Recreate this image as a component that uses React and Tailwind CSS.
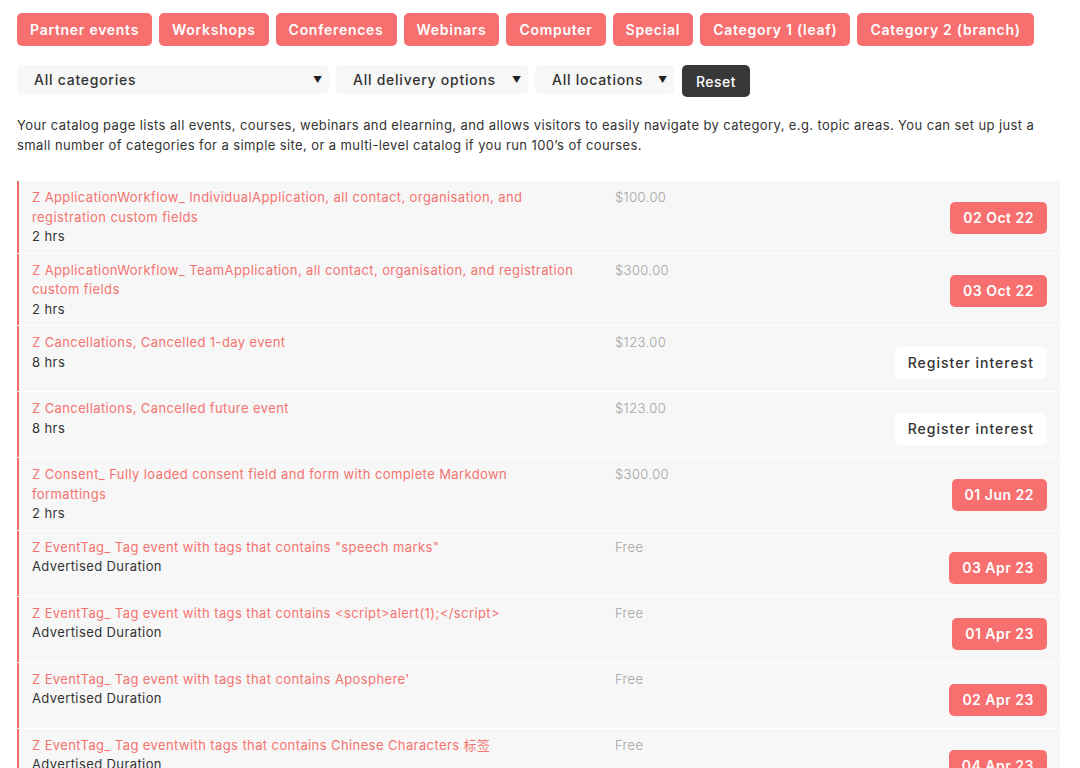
import React from "react";

const TAGS = [
  "Partner events", "Workshops", "Conferences", "Webinars", "Computer",
  "Special", "Category 1 (leaf)", "Category 2 (branch)",
];

const EVENTS = [
  { title: "Z ApplicationWorkflow_ IndividualApplication, all contact, organisation, and registration custom fields", dur: "2 hrs", price: "$100.00", date: "02 Oct 22" },
  { title: "Z ApplicationWorkflow_ TeamApplication, all contact, organisation, and registration custom fields", dur: "2 hrs", price: "$300.00", date: "03 Oct 22" },
  { title: "Z Cancellations, Cancelled 1-day event", dur: "8 hrs", price: "$123.00", interest: true },
  { title: "Z Cancellations, Cancelled future event", dur: "8 hrs", price: "$123.00", interest: true },
  { title: "Z Consent_ Fully loaded consent field and form with complete Markdown", rest: "formattings", dur: "2 hrs", price: "$300.00", date: "01 Jun 22" },
  { title: "Z EventTag_ Tag event with tags that contains \"speech marks\"", dur: "Advertised Duration", price: "Free", date: "03 Apr 23" },
  { title: "Z EventTag_ Tag event with tags that contains <script>alert(1);</script>", dur: "Advertised Duration", price: "Free", date: "01 Apr 23" },
  { title: "Z EventTag_ Tag event with tags that contains Aposphere'", dur: "Advertised Duration", price: "Free", date: "02 Apr 23" },
  { title: "Z EventTag_ Tag eventwith tags that contains Chinese Characters 标签", dur: "Advertised Duration", price: "Free", date: "04 Apr 23" },
];

const Select = ({ label, w }) => (
  <div className={`${w} h-[29px] bg-[#f7f7f7] rounded-[5px] flex items-center justify-between pl-[17px] pr-[6px] text-[14px] font-medium text-[#333] tracking-[0.75px]`}>
    <span>{label}</span>
    <span className="text-[9px] text-[#222]">▼</span>
  </div>
);

const EventRow = ({ e }) => (
  <div className="flex bg-[#f7f7f7] border-l-2 border-[#f26a6a] pt-[7px] pb-[6px] pl-[13px] pr-[13px] text-[13px] leading-[19.5px] tracking-[0.4px]">
    <div className="w-[562px] mr-[21px]">
      <p className="text-[#f4736f]">{e.title}{e.rest && <><br />{e.rest}</>}</p>
      <p className="text-[#333]">{e.dur}</p>
    </div>
    <div className="flex-1 text-[#a3a3a3] font-light">{e.price}</div>
    <div className="pt-[14px] pb-[6px]">
      {e.interest ? (
        <button className="h-[32px] px-[13px] bg-white rounded-[5px] text-[14px] font-medium text-[#333] tracking-[1px]">Register interest</button>
      ) : (
        <button className="h-[32px] px-[13px] bg-[#f76f6f] rounded-[5px] text-[14px] font-semibold text-white tracking-[0.5px]">{e.date}</button>
      )}
    </div>
  </div>
);

export default function App() {
  return (
    <div className="min-h-screen bg-white px-[17px] pt-[13px] pr-[20px]" style={{ fontFamily: "Inter, 'Noto Sans CJK SC', sans-serif" }}>
      {/* category tags */}
      <div className="flex gap-[7px]">
        {TAGS.map(t => (
          <button key={t} className="h-[33px] px-[13px] bg-[#f76f6f] rounded-[5px] text-white text-[14px] font-semibold tracking-[0.72px]">{t}</button>
        ))}
      </div>

      {/* filters */}
      <div className="flex items-start gap-[7px] mt-[19px]">
        <Select label="All categories" w="w-[312px]" />
        <Select label="All delivery options" w="w-[192px]" />
        <Select label="All locations" w="w-[139px]" />
        <button className="h-[32px] w-[68px] ml-[1px] bg-[#383838] rounded-[5px] text-white text-[14px] font-medium tracking-[0.5px]">Reset</button>
      </div>

      <p className="mt-[19px] text-[13px] leading-[19.5px] text-[#333] tracking-[0.4px]">
        Your catalog page lists all events, courses, webinars and elearning, and allows visitors to easily navigate by category, e.g. topic areas. You can set up just a small number of categories for a simple site, or a multi-level catalog if you run 100’s of courses.
      </p>

      <div className="mt-[26px] flex flex-col gap-[1px]">
        {EVENTS.map(e => <EventRow key={e.title} e={e} />)}
      </div>
    </div>
  );
}
